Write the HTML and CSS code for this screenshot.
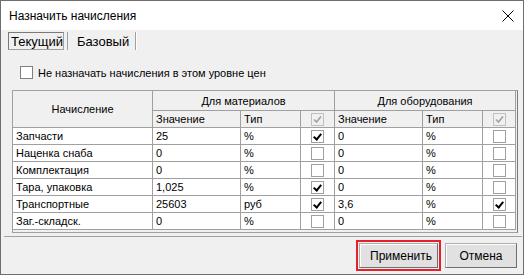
FILE: index.html
```html
<!DOCTYPE html>
<html lang="ru">
<head>
<meta charset="utf-8">
<link rel="stylesheet" href="styles.css">
</head>
<body>
<div class="window">
  <div class="titlebar">
    <span class="title">Назначить начисления</span>
    <svg class="close" width="12" height="12" viewBox="0 0 12 12"><path d="M0.5 0.5L11.5 11.5M11.5 0.5L0.5 11.5" stroke="#000" stroke-width="1" fill="none"/></svg>
  </div>
  <div class="body">
    <div class="tabs">
      <div class="tab active">Текущий</div>
      <div class="tab">Базовый</div>
    </div>
    <div class="panel">
      <div class="opt"><span class="cb"></span><span>Не назначать начисления в этом уровне цен</span></div>
      <div class="grid">
        <table>
          <colgroup>
            <col class="c-name"><col class="c-val"><col class="c-type"><col class="c-chk">
            <col class="c-val"><col class="c-type"><col class="c-chk2">
          </colgroup>
          <thead>
            <tr class="h1">
              <th rowspan="2" class="hname">Начисление</th>
              <th colspan="3">Для материалов</th>
              <th colspan="3">Для оборудования</th>
            </tr>
            <tr class="h2">
              <th>Значение</th><th>Тип</th><th class="chk"><span class="box hdr"><svg viewBox="0 0 9 9"><path d="M1 4.5L3.5 7L8 1.5" stroke="#a0a0a0" stroke-width="1.6" fill="none"/></svg></span></th>
              <th>Значение</th><th>Тип</th><th class="chk"><span class="box hdr"><svg viewBox="0 0 9 9"><path d="M1 4.5L3.5 7L8 1.5" stroke="#a0a0a0" stroke-width="1.6" fill="none"/></svg></span></th>
            </tr>
          </thead>
          <tbody>
            <tr><td>Запчасти</td><td>25</td><td>%</td><td class="chk"><span class="box on"></span></td><td>0</td><td>%</td><td class="chk"><span class="box"></span></td></tr>
            <tr><td>Наценка снаба</td><td>0</td><td>%</td><td class="chk"><span class="box"></span></td><td>0</td><td>%</td><td class="chk"><span class="box"></span></td></tr>
            <tr><td>Комплектация</td><td>0</td><td>%</td><td class="chk"><span class="box"></span></td><td>0</td><td>%</td><td class="chk"><span class="box"></span></td></tr>
            <tr><td>Тара, упаковка</td><td>1,025</td><td>%</td><td class="chk"><span class="box on"></span></td><td>0</td><td>%</td><td class="chk"><span class="box"></span></td></tr>
            <tr><td>Транспортные</td><td>25603</td><td>руб</td><td class="chk"><span class="box on"></span></td><td>3,6</td><td>%</td><td class="chk"><span class="box on"></span></td></tr>
            <tr><td>Заг.-складск.</td><td>0</td><td>%</td><td class="chk"><span class="box"></span></td><td>0</td><td>%</td><td class="chk"><span class="box"></span></td></tr>
          </tbody>
        </table>
      </div>
    </div>
    <div class="footer">
      <div class="hl"><button class="btn">Применить</button></div>
      <button class="btn">Отмена</button>
    </div>
  </div>
</div>
</body>
</html>
```
FILE: styles.css
```css
html, body { margin: 0; padding: 0; background: #fff; }
body { font-family: "Liberation Sans", Arial, sans-serif; color: #000; }

.window {
  width: 524px;
  height: 275px;
  box-sizing: border-box;
  border: 1px solid #6e6e6e;
  display: flex;
  flex-direction: column;
  background: #f0f0f0;
}

.titlebar {
  height: 29px;
  flex: none;
  background: #fff;
  display: flex;
  align-items: center;
  justify-content: space-between;
  padding: 1px 9px 0 8px;
  box-sizing: border-box;
  font-size: 12px;
}
.close { display: block; }

.body { flex: 1; display: flex; flex-direction: column; }

.tabs {
  display: flex;
  height: 18px;
  margin-top: 2px;
  padding-left: 7px;
  font-size: 13px;
}
.tab {
  display: flex;
  align-items: center;
  padding: 0 6px 0 9px;
  border-right: 1px solid #a0a0a0;
  box-shadow: 1px 0 0 #fff;
  margin-right: 4px;
}
.tab.active {
  width: 56px;
  box-sizing: border-box;
  padding: 0 0 0 2px;
  border: 1px solid #a0a0a0;
  border-top-color: #7a7a7a;
  border-left-color: #7a7a7a;
  background: #f0f0f0;
  box-shadow: none;
  margin-right: 3px;
}
.tab.active + .tab { border-left: 1px solid #a0a0a0; padding-left: 9px; }

.panel {
  flex: none;
  padding: 16px 4px 3px 8px;
  border-bottom: 1px solid #a0a0a0;
  margin: 0 1px 0 3px;
}

.opt {
  display: flex;
  align-items: center;
  height: 13px;
  padding-left: 8px;
  font-size: 11px;
  gap: 5px;
}
.cb {
  width: 11px;
  height: 11px;
  border: 1px solid #808080;
  background: #fff;
  display: inline-block;
}

.grid {
  margin-top: 11px;
  height: 143px;
  box-sizing: border-box;
  border: 1px solid #a0a0a0;
  border-right-color: #7a7a7a;
  background: #f0f0f0;
}

table {
  border-collapse: collapse;
  table-layout: fixed;
  width: 503px;
  font-size: 11px;
  margin: -1px 0 0 -1px;
}
.c-name { width: 140px; }
.c-val { width: 88px; }
.c-type { width: 60px; }
.c-chk { width: 34px; }
.c-chk2 { width: 33px; }

th, td {
  border: 1px solid #a0a0a0;
  padding: 0 0 0 3px;
  height: 16px;
  line-height: 14px;
  white-space: nowrap;
  overflow: hidden;
  text-align: left;
  font-weight: normal;
}
th { background: #f0f0f0; }
td { background: #fff; }
.h1 th { height: 19px; text-align: center; padding: 0; }
th.hname { text-align: center; padding: 0; }
.chk { text-align: center; padding: 0; }

.box {
  display: inline-block;
  width: 11px;
  height: 11px;
  border: 1px solid #a0a0a0;
  background: #fff;
  vertical-align: middle;
  position: relative;
}
.box.hdr { background: #f0f0f0; border-color: #c0c0c0; }
.box svg { width: 9px; height: 9px; position: absolute; left: 1px; top: 1px; }
.box.on::after {
  content: "";
  position: absolute;
  left: 3px;
  top: 1px;
  width: 3px;
  height: 6px;
  border: solid #000;
  border-width: 0 2px 2px 0;
  transform: rotate(40deg);
}

.footer {
  flex: 1;
  display: flex;
  align-items: center;
  justify-content: flex-end;
  padding-right: 6px;
  gap: 4px;
}
.hl {
  border: 2px solid #e5202b;
  padding: 1px;
}
.btn {
  font-family: "Liberation Sans", Arial, sans-serif;
  font-size: 12px;
  height: 25px;
  min-width: 72px;
  padding: 0 10px;
  background: #e1e1e1;
  border: 1px solid #adadad;
  border-right-color: #6e6e6e;
  border-bottom-color: #6e6e6e;
  box-shadow: inset 1px 1px 0 #fff;
  color: #000;
}
.hl .btn { width: 79px; display: block; }
```
